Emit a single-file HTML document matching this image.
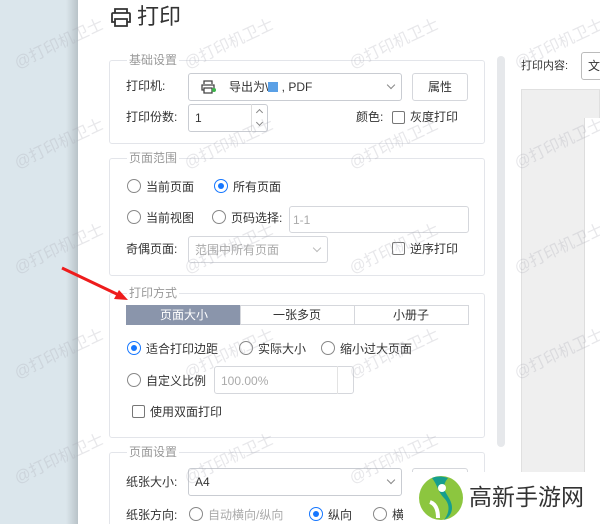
<!DOCTYPE html>
<html style="width:600px;height:524px;overflow:hidden"><head><meta charset="utf-8"><style>
*{margin:0;padding:0;box-sizing:border-box}
body{width:600px;height:524px;overflow:hidden;position:relative;background:#fff;font-family:"Liberation Sans","Noto Sans CJK SC",sans-serif;font-size:12px;color:#333}
.a{position:absolute;white-space:nowrap}
.grp{position:absolute;border:1px solid #e3e5ea;border-radius:3px}
.lg{position:absolute;background:#fff;color:#999;font-size:12px;padding:0 2px;line-height:14px}
.box{position:absolute;border:1px solid #c9ccd2;border-radius:3px;background:#fff}
.rd{position:absolute;width:14px;height:14px;border:1px solid #888;border-radius:50%;background:#fff}
.rd.on{border-color:#1677ff}
.rd.on::after{content:"";position:absolute;left:3px;top:3px;width:6px;height:6px;border-radius:50%;background:#1677ff}
.cb{position:absolute;width:13px;height:13px;border:1px solid #777;border-radius:2px;background:#fff}
.t{position:absolute;white-space:nowrap;line-height:14px;transform:translateY(-7px)}
.chev{position:absolute;width:6px;height:6px;border-right:1px solid #888;border-bottom:1px solid #888;transform:rotate(45deg)}
.wm{position:absolute;color:rgba(170,170,180,.28);font-size:16px;transform:rotate(-25deg);white-space:nowrap}
</style></head><body>
<div class="a" style="left:0;top:0;width:72px;height:524px;background:#dbe6ec"></div>
<div class="a" style="left:66px;top:0;width:12px;height:524px;background:linear-gradient(90deg,#dbe6ec,#b9c3c8)"></div>

<svg class="a" style="left:110px;top:7px" width="22" height="20" viewBox="0 0 22 20"><path d="M5 6V2h12v4M5 15H2V7a1 1 0 0 1 1-1h16a1 1 0 0 1 1 1v8h-3M5 12h12v7H5z" fill="none" stroke="#333" stroke-width="1.8"/></svg>
<div class="a" style="left:137px;top:3px;font-size:22px;line-height:28px;color:#333">打印</div>

<div class="grp" style="left:109px;top:60px;width:376px;height:84px"></div>
<div class="lg" style="left:127px;top:53px">基础设置</div>
<div class="t" style="left:126px;top:86px">打印机:</div>
<div class="box" style="left:188px;top:73px;width:214px;height:28px"></div>
<svg class="a" style="left:201px;top:80px" width="15" height="14" viewBox="0 0 15 14"><path d="M3 4V1h8v3M3 10H1V5h12v5h-2M3 8h8v5H3z" fill="none" stroke="#444" stroke-width="1.3"/><circle cx="13" cy="10" r="2" fill="#3bb54a"/></svg>
<div class="t" style="left:229px;top:87px">导出为\<span style="display:inline-block;width:10px;height:10px;background:#5aa0e6;vertical-align:-1px"></span> , PDF</div>
<div class="chev" style="left:388px;top:82px"></div>
<div class="box" style="left:412px;top:73px;width:56px;height:28px;border-color:#d5d7dc"></div>
<div class="t" style="left:428px;top:87px">属性</div>
<div class="t" style="left:126px;top:117px">打印份数:</div>
<div class="box" style="left:188px;top:104px;width:80px;height:28px"></div>
<div class="a" style="left:251px;top:104px;width:1px;height:28px;background:#ddd"></div>
<div class="t" style="left:195px;top:118px">1</div>
<div class="chev" style="left:257px;top:110px;transform:rotate(-135deg);width:5px;height:5px"></div>
<div class="chev" style="left:257px;top:120px;width:5px;height:5px"></div>
<div class="t" style="left:356px;top:117px">颜色:</div>
<div class="cb" style="left:392px;top:111px"></div>
<div class="t" style="left:410px;top:117px">灰度打印</div>

<div class="grp" style="left:109px;top:158px;width:376px;height:118px"></div>
<div class="lg" style="left:127px;top:151px">页面范围</div>
<div class="rd" style="left:127px;top:179px"></div><div class="t" style="left:146px;top:187px">当前页面</div>
<div class="rd on" style="left:214px;top:179px"></div><div class="t" style="left:233px;top:187px">所有页面</div>
<div class="rd" style="left:127px;top:210px"></div><div class="t" style="left:146px;top:218px">当前视图</div>
<div class="rd" style="left:212px;top:210px"></div><div class="t" style="left:231px;top:218px">页码选择:</div>
<div class="box" style="left:289px;top:206px;width:180px;height:27px;border-color:#d5d7dc"></div>
<div class="t" style="left:293px;top:220px;color:#aaa">1-1</div>
<div class="t" style="left:126px;top:249px">奇偶页面:</div>
<div class="box" style="left:188px;top:236px;width:140px;height:27px;border-color:#d5d7dc"></div>
<div class="t" style="left:195px;top:250px;color:#aaa">范围中所有页面</div>
<div class="chev" style="left:314px;top:245px;border-color:#bbb"></div>
<div class="cb" style="left:392px;top:242px"></div><div class="t" style="left:410px;top:249px">逆序打印</div>

<div class="grp" style="left:109px;top:293px;width:376px;height:145px"></div>
<div class="lg" style="left:127px;top:286px">打印方式</div>
<div class="a" style="left:126px;top:305px;width:343px;height:20px;border:1px solid #d5d7dc"></div>
<div class="a" style="left:126px;top:305px;width:114px;height:20px;background:#8a95ab"></div>
<div class="a" style="left:240px;top:305px;width:1px;height:20px;background:#d5d7dc"></div>
<div class="a" style="left:354px;top:305px;width:1px;height:20px;background:#d5d7dc"></div>
<div class="t" style="left:160px;top:315px;color:#fff">页面大小</div>
<div class="t" style="left:273px;top:315px">一张多页</div>
<div class="t" style="left:393px;top:315px">小册子</div>
<div class="rd on" style="left:127px;top:341px"></div><div class="t" style="left:146px;top:349px">适合打印边距</div>
<div class="rd" style="left:239px;top:341px"></div><div class="t" style="left:258px;top:349px">实际大小</div>
<div class="rd" style="left:321px;top:341px"></div><div class="t" style="left:340px;top:349px">缩小过大页面</div>
<div class="rd" style="left:127px;top:373px"></div><div class="t" style="left:146px;top:381px">自定义比例</div>
<div class="box" style="left:214px;top:366px;width:140px;height:28px;border-color:#d5d7dc"></div>
<div class="a" style="left:337px;top:366px;width:1px;height:28px;background:#e3e3e3"></div>
<div class="t" style="left:221px;top:381px;color:#aaa">100.00%</div>
<div class="cb" style="left:132px;top:405px"></div><div class="t" style="left:150px;top:412px">使用双面打印</div>

<div class="grp" style="left:109px;top:452px;width:376px;height:80px"></div>
<div class="lg" style="left:127px;top:445px">页面设置</div>
<div class="t" style="left:126px;top:482px">纸张大小:</div>
<div class="box" style="left:188px;top:468px;width:214px;height:28px"></div>
<div class="t" style="left:195px;top:482px">A4</div>
<div class="chev" style="left:388px;top:477px"></div>
<div class="box" style="left:412px;top:468px;width:56px;height:28px;border-color:#d5d7dc"></div>
<div class="t" style="left:126px;top:515px">纸张方向:</div>
<div class="rd" style="left:189px;top:507px"></div><div class="t" style="left:208px;top:515px;color:#aaa">自动横向/纵向</div>
<div class="rd on" style="left:309px;top:507px"></div><div class="t" style="left:328px;top:515px">纵向</div>
<div class="rd" style="left:373px;top:507px"></div><div class="t" style="left:392px;top:515px">横</div>

<div class="a" style="left:497px;top:56px;width:8px;height:391px;background:#e6e8eb;border-radius:4px"></div>
<div class="t" style="left:521px;top:66px;font-size:11px">打印内容:</div>
<div class="box" style="left:581px;top:52px;width:30px;height:28px;border-color:#bbb"></div>
<div class="t" style="left:588px;top:66px">文</div>
<div class="a" style="left:521px;top:89px;width:79px;height:435px;background:#efefef;border:1px solid #e0e0e0"></div>
<div class="a" style="left:584px;top:118px;width:16px;height:406px;background:#fff;border-left:1px solid #ddd"></div>

<div class="a" style="left:403px;top:472px;width:197px;height:52px;background:#fff"></div>
<svg class="a" style="left:418px;top:474px" width="46" height="48" viewBox="0 0 46 48"><circle cx="23" cy="24" r="22" fill="#8cc63f"/><path d="M14 4c6 8 6 14 12 20s6 14 0 22c8-4 10-12 6-20S22 14 30 4c-6-2-12-2-16 0z" fill="#169e8e"/><circle cx="24" cy="14" r="4" fill="#fff"/><path d="M12 28c6 2 8 8 8 16" stroke="#fff" stroke-width="4" fill="none"/></svg>
<div class="a" style="left:469px;top:483px;font-size:23px;line-height:28px;color:#333">高新手游网</div>

<svg class="a" style="left:55px;top:262px" width="80" height="45"><line x1="7" y1="6" x2="68" y2="35" stroke="#ee1c1c" stroke-width="3"/><path d="M73 38l-14-1 5-9z" fill="#ee1c1c"/></svg>

<div class="wm" style="left:10px;top:30px">@打印机卫士</div>
<div class="wm" style="left:180px;top:30px">@打印机卫士</div>
<div class="wm" style="left:345px;top:30px">@打印机卫士</div>
<div class="wm" style="left:510px;top:30px">@打印机卫士</div>
<div class="wm" style="left:10px;top:130px">@打印机卫士</div>
<div class="wm" style="left:180px;top:130px">@打印机卫士</div>
<div class="wm" style="left:345px;top:130px">@打印机卫士</div>
<div class="wm" style="left:510px;top:130px">@打印机卫士</div>
<div class="wm" style="left:10px;top:235px">@打印机卫士</div>
<div class="wm" style="left:180px;top:235px">@打印机卫士</div>
<div class="wm" style="left:345px;top:235px">@打印机卫士</div>
<div class="wm" style="left:510px;top:235px">@打印机卫士</div>
<div class="wm" style="left:10px;top:340px">@打印机卫士</div>
<div class="wm" style="left:180px;top:340px">@打印机卫士</div>
<div class="wm" style="left:345px;top:340px">@打印机卫士</div>
<div class="wm" style="left:510px;top:340px">@打印机卫士</div>
<div class="wm" style="left:10px;top:445px">@打印机卫士</div>
<div class="wm" style="left:180px;top:445px">@打印机卫士</div>
<div class="wm" style="left:345px;top:445px">@打印机卫士</div>
</body></html>
